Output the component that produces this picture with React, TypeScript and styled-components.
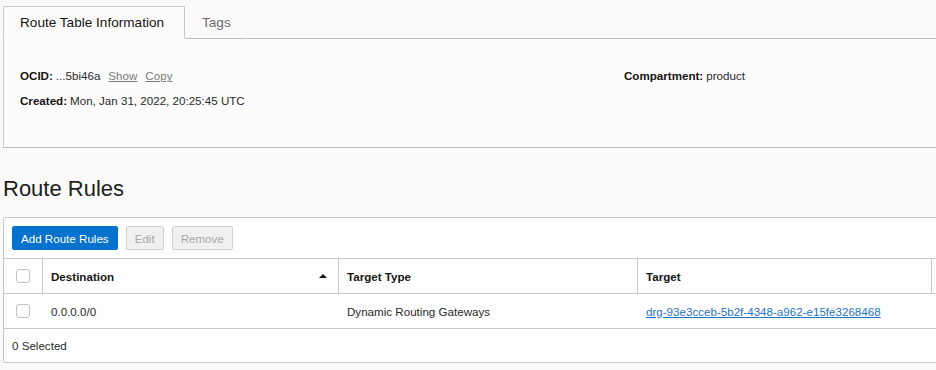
import React from 'react';
import styled, { createGlobalStyle } from 'styled-components';

const GlobalStyle = createGlobalStyle`
  html, body {
    margin: 0;
    padding: 0;
    background: #fafafa;
    overflow: hidden;
  }
  body {
    font-family: 'Liberation Sans', Arial, sans-serif;
    color: #161513;
    font-size: 11.6px;
  }
`;

const Page = styled.div`
  width: 1000px;
  padding: 6px 0 0 3px;
`;

const TabBar = styled.div`
  display: flex;
  height: 33px;
`;

const Tab = styled.div<{ $active?: boolean }>`
  display: flex;
  align-items: center;
  padding: 0 16px;
  font-size: 13.6px;
  white-space: nowrap;
  color: ${(p) => (p.$active ? '#161513' : '#6b6b6b')};
  background: ${(p) => (p.$active ? '#fcfcfc' : 'transparent')};
  border: 1px solid ${(p) => (p.$active ? '#c8c8c8' : 'transparent')};
  border-bottom: 1px solid ${(p) => (p.$active ? '#fcfcfc' : '#bdbdbd')};
  box-sizing: border-box;
  width: ${(p) => (p.$active ? '182px' : 'auto')};
`;

const TabFill = styled.div`
  flex: 1;
  border-bottom: 1px solid #bdbdbd;
`;

const InfoPanel = styled.div`
  height: 109px;
  background: #fcfcfc;
  border-left: 1px solid #c8c8c8;
  border-bottom: 1px solid #b8b8b8;
  display: grid;
  grid-template-columns: 604px 1fr;
  padding: 30px 0 0 16px;
  box-sizing: border-box;
  align-content: start;
  row-gap: 11px;
`;

const InfoLine = styled.div`
  line-height: 14px;
  color: #2a2a2a;
`;

const Label = styled.b`
  color: #161513;
  margin-right: 3px;
`;

const SoftLink = styled.a`
  color: #7a7a7a;
  text-decoration: underline;
  margin-left: 8px;
  cursor: pointer;
`;

const Heading = styled.h2`
  margin: 28px 0 15px;
  font-size: 22px;
  font-weight: 400;
  line-height: 26px;
  color: #1e1e1e;
`;

const TableBox = styled.div`
  border: 1px solid #c8c8c8;
  border-radius: 2px;
  background: #ffffff;
`;

const Toolbar = styled.div`
  display: flex;
  gap: 8px;
  padding: 8px;
  border-bottom: 1px solid #c8c8c8;
`;

const Button = styled.button<{ $primary?: boolean }>`
  height: 24px;
  padding: 0 8px;
  font-family: inherit;
  font-size: 11.6px;
  border-radius: 2px;
  border: 1px solid ${(p) => (p.$primary ? '#0572ce' : '#d0d0d0')};
  background: ${(p) => (p.$primary ? '#0572ce' : '#f0f0f0')};
  color: ${(p) => (p.$primary ? '#ffffff' : '#a8a8a8')};
`;

const Row = styled.div<{ $head?: boolean }>`
  display: grid;
  grid-template-columns: 38px 296px 299px 294px 1fr;
  height: 34px;
  border-bottom: 1px solid #c8c8c8;
  font-weight: ${(p) => (p.$head ? 700 : 400)};
  color: ${(p) => (p.$head ? '#161513' : '#2a2a2a')};
`;

const Cell = styled.div<{ $divider?: boolean }>`
  display: flex;
  align-items: center;
  padding-left: 8px;
  border-left: 1px solid ${(p) => (p.$divider ? '#c8c8c8' : 'transparent')};
  position: relative;
`;

const CheckCell = styled.div`
  display: flex;
  align-items: center;
  justify-content: center;
`;

const Check = styled.span`
  width: 12px;
  height: 12px;
  border: 1px solid #c2c2c2;
  border-radius: 3px;
  background: #fff;
  margin-left: -1px;
`;

const SortArrow = styled.span`
  position: absolute;
  right: 11px;
  top: 15px;
  width: 0;
  height: 0;
  border-left: 4px solid transparent;
  border-right: 4px solid transparent;
  border-bottom: 4px solid #161513;
`;

const TargetLink = styled.a`
  color: #1f74c8;
  text-decoration: underline;
  cursor: pointer;
`;

const Footer = styled.div`
  height: 33px;
  display: flex;
  align-items: center;
  padding-left: 8px;
  color: #2a2a2a;
`;

export default function App() {
  return (
    <Page>
      <GlobalStyle />
      <TabBar>
        <Tab $active>Route Table Information</Tab>
        <Tab>Tags</Tab>
        <TabFill />
      </TabBar>
      <InfoPanel>
        <InfoLine>
          <Label>OCID:</Label>...5bi46a
          <SoftLink>Show</SoftLink>
          <SoftLink>Copy</SoftLink>
        </InfoLine>
        <InfoLine>
          <Label>Compartment:</Label>product
        </InfoLine>
        <InfoLine>
          <Label>Created:</Label>Mon, Jan 31, 2022, 20:25:45 UTC
        </InfoLine>
      </InfoPanel>
      <Heading>Route Rules</Heading>
      <TableBox>
        <Toolbar>
          <Button $primary>Add Route Rules</Button>
          <Button disabled>Edit</Button>
          <Button disabled>Remove</Button>
        </Toolbar>
        <Row $head>
          <CheckCell>
            <Check />
          </CheckCell>
          <Cell $divider>
            Destination
            <SortArrow />
          </Cell>
          <Cell $divider>Target Type</Cell>
          <Cell $divider>Target</Cell>
          <Cell $divider />
        </Row>
        <Row>
          <CheckCell>
            <Check />
          </CheckCell>
          <Cell>0.0.0.0/0</Cell>
          <Cell>Dynamic Routing Gateways</Cell>
          <Cell>
            <TargetLink>drg-93e3cceb-5b2f-4348-a962-e15fe3268468</TargetLink>
          </Cell>
          <Cell />
        </Row>
        <Footer>0 Selected</Footer>
      </TableBox>
    </Page>
  );
}
